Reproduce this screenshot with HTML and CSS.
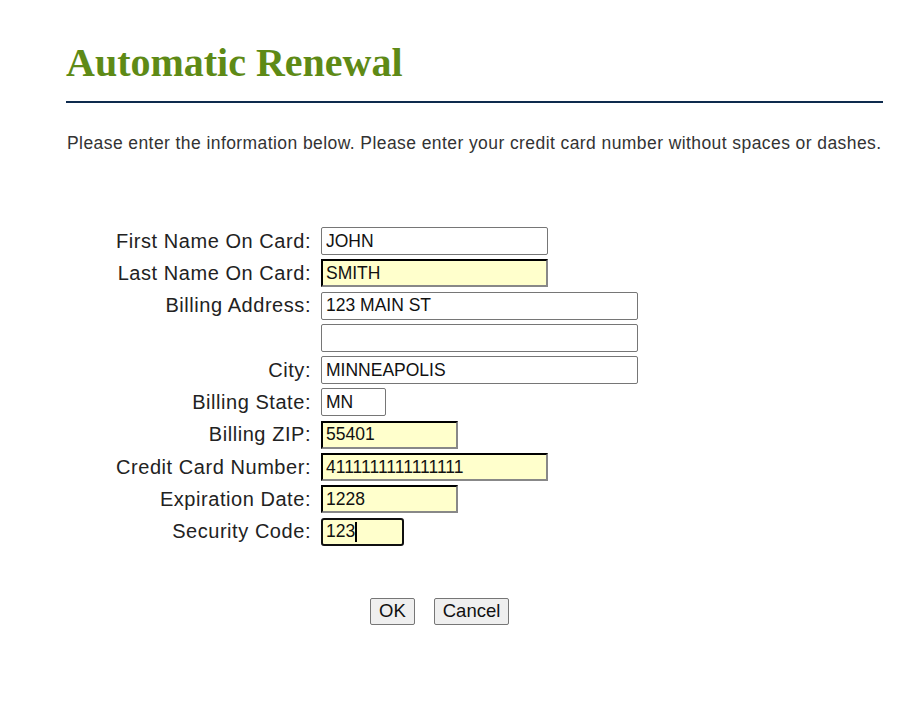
FILE: index.html
```html
<!DOCTYPE html>
<html>
<head>
<meta charset="utf-8">
<link rel="stylesheet" href="styles.css">
</head>
<body>
<div class="page">
  <h1 class="title">Automatic Renewal</h1>
  <hr class="rule">
  <p class="intro">Please enter the information below. Please enter your credit card number without spaces or dashes.</p>
  <form class="form">
    <label class="lbl">First Name On Card:</label>
    <input class="inp w-name" type="text" value="JOHN">
    <label class="lbl">Last Name On Card:</label>
    <input class="inp w-name req" type="text" value="SMITH">
    <label class="lbl">Billing Address:</label>
    <input class="inp w-addr" type="text" value="123 MAIN ST">
    <span class="lbl"></span>
    <input class="inp w-addr" type="text" value="">
    <label class="lbl">City:</label>
    <input class="inp w-addr" type="text" value="MINNEAPOLIS">
    <label class="lbl">Billing State:</label>
    <input class="inp w-state" type="text" value="MN">
    <label class="lbl">Billing ZIP:</label>
    <input class="inp w-zip req" type="text" value="55401">
    <label class="lbl">Credit Card Number:</label>
    <input class="inp w-name req" type="text" value="4111111111111111">
    <label class="lbl">Expiration Date:</label>
    <input class="inp w-zip req" type="text" value="1228">
    <label class="lbl">Security Code:</label>
    <div class="inp w-sec req focus"><span>123</span><span class="caret"></span></div>
  </form>
  <div class="buttons">
    <button class="btn" type="button">OK</button>
    <button class="btn" type="button">Cancel</button>
  </div>
</div>
</body>
</html>
```
FILE: styles.css
```css
html, body {
  margin: 0;
  padding: 0;
  background: #fff;
}
.page {
  padding: 0 30px 0 66px;
  font-family: "Liberation Sans", Arial, sans-serif;
  color: #222;
}
.title {
  margin: 0;
  padding-top: 41px;
  font-family: "Liberation Serif", "Times New Roman", serif;
  font-weight: bold;
  font-size: 40px;
  line-height: 44px;
  color: #5e8a16;
}
.rule {
  margin: 16px 0 0 0;
  border: 0;
  height: 2px;
  background: #0e2b4e;
}
.intro {
  margin: 30px 0 0 1px;
  font-size: 17.5px;
  letter-spacing: 0.42px;
  line-height: 20px;
  color: #333;
}
.form {
  margin-top: 74px;
  display: grid;
  grid-template-columns: 245px auto;
  column-gap: 10px;
  row-gap: 4.3px;
  align-items: center;
  justify-items: start;
}
.lbl {
  justify-self: end;
  font-size: 20px;
  letter-spacing: 0.55px;
  color: #222;
}
.inp {
  box-sizing: border-box;
  height: 28px;
  margin: 0;
  padding: 0 4px;
  font-family: "Liberation Sans", Arial, sans-serif;
  font-size: 17.5px;
  color: #111;
  background: #fff;
  border: 1px solid #767676;
  border-radius: 2px;
  outline: none;
}
.w-name { width: 227px; }
.w-addr { width: 317px; }
.w-state { width: 65px; }
.w-zip { width: 137px; }
.w-sec { width: 83px; }
.req {
  background: #ffffcc;
  border: 2px inset #767676;
  border-top-color: #333;
  border-left-color: #333;
  border-bottom-color: #888;
  border-right-color: #888;
  border-radius: 0;
  padding: 0 3px;
}
.focus {
  display: flex;
  align-items: center;
  border: 2px solid #101010;
  border-radius: 3px;
}
.caret {
  display: inline-block;
  width: 2px;
  height: 20px;
  background: #000;
}
.buttons {
  margin-top: 52px;
  display: flex;
  gap: 19px;
  padding-left: 304px;
}
.btn {
  box-sizing: border-box;
  height: 27px;
  padding: 0 8px;
  font-family: "Liberation Sans", Arial, sans-serif;
  font-size: 18.5px;
  color: #111;
  background: #efefef;
  border: 1px solid #767676;
  border-radius: 2px;
}
```
